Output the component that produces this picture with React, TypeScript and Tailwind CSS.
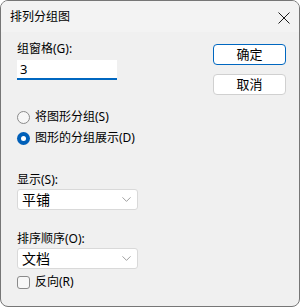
import { ChevronDown } from "lucide-react";

const FONT = "font-['Noto_Sans','Noto_Sans_CJK_SC',sans-serif]";

function Radio({ checked, label }: { checked?: boolean; label: string }) {
  return (
    <div className="flex items-center gap-[5px] h-[20px]">
      {checked ? (
        <span className="w-[13px] h-[13px] rounded-full bg-[#005fb8] flex items-center justify-center">
          <span className="w-[5px] h-[5px] rounded-full bg-white" />
        </span>
      ) : (
        <span className="w-[13px] h-[13px] rounded-full border border-[#8a8a8a] bg-[#f7f7f7]" />
      )}
      <span>{label}</span>
    </div>
  );
}

function Select({ value }: { value: string }) {
  return (
    <div className="w-[121px] h-[21px] mt-[1px] bg-white border border-[#d9d9d9] rounded-[3px] flex items-center justify-between pl-[4px] pr-[3px]">
      <span className="text-[14px] leading-[19px]">{value}</span>
      <ChevronDown size={15} strokeWidth={1} className="text-[#666]" />
    </div>
  );
}

export default function App() {
  return (
    <div className={`${FONT} w-[300px] h-[307px] text-[12px] text-black`}>
      <div className="h-full rounded-[8px] border border-[#767676] bg-[#f0f0f0] overflow-hidden flex flex-col">
        {/* Title bar */}
        <div className="h-[31px] bg-[#f3f3f3] flex items-center justify-between pl-[9px] pr-[9px] shrink-0">
          <span className="text-[12px]">排列分组图</span>
          <svg width="12" height="12" viewBox="0 0 12 12" className="mt-[2px]">
            <path d="M0.5 0.5 L11.5 11.5 M11.5 0.5 L0.5 11.5" stroke="#1a1a1a" strokeWidth="1" fill="none" />
          </svg>
        </div>

        <div className="flex pl-[16px] pr-[13px] pt-[8px]">
          <div className="flex-1 flex flex-col">
            <div className="h-[17px] leading-[17px]">组窗格(G):</div>
            <div className="w-[100px] h-[20px] mt-[3px] bg-white border-b-2 border-[#0067c0] pl-[3px] text-[13px] leading-[18px]">
              3
            </div>

            <div className="mt-[27px] flex flex-col gap-[1px]">
              <Radio label="将图形分组(S)" />
              <Radio checked label="图形的分组展示(D)" />
            </div>

            <div className="mt-[23px] h-[17px] leading-[17px]">显示(S):</div>
            <Select value="平铺" />

            <div className="mt-[20px] h-[17px] leading-[17px]">排序顺序(O):</div>
            <Select value="文档" />

            <div className="mt-[3px] flex items-center gap-[5px] h-[20px]">
              <span className="w-[13px] h-[13px] rounded-[3px] border border-[#8a8a8a] bg-[#f7f7f7]" />
              <span>反向(R)</span>
            </div>
          </div>

          <div className="flex flex-col gap-[9px] pt-[4px]">
            <button className="w-[73px] h-[21px] bg-white border border-[#0067c0] rounded-[4px] text-[13px] leading-[19px]">
              确定
            </button>
            <button className="w-[73px] h-[21px] bg-white border border-[#d0d0d0] rounded-[4px] text-[13px] leading-[19px]">
              取消
            </button>
          </div>
        </div>
      </div>
    </div>
  );
}
